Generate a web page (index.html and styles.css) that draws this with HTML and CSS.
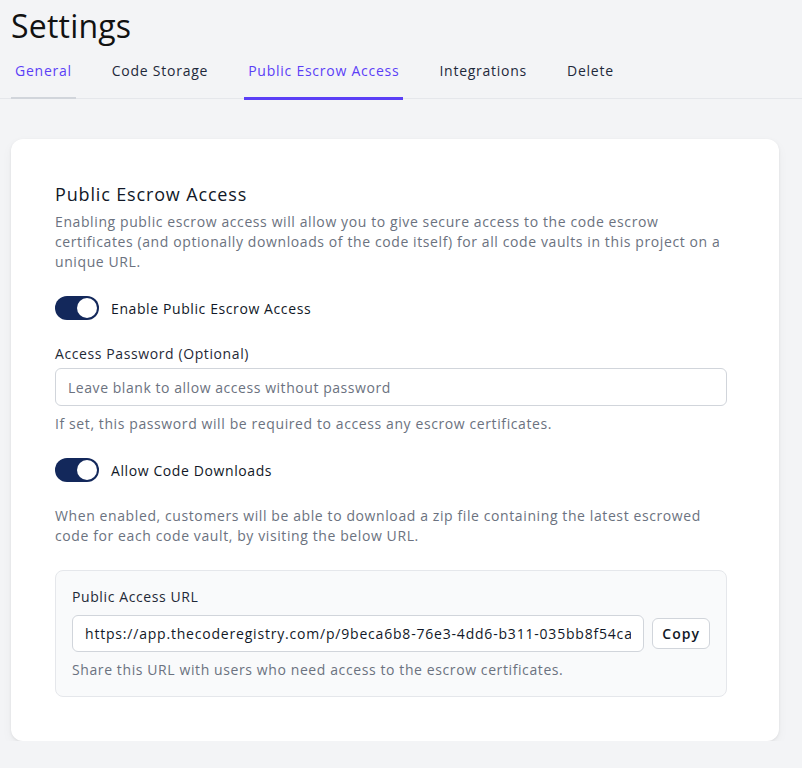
FILE: index.html
```html
<!DOCTYPE html>
<html lang="en">
<head>
  <meta charset="UTF-8" />
  <meta name="viewport" content="width=device-width, initial-scale=1.0"/>
  <title>Settings</title>
  <link rel="stylesheet" href="styles.css">
</head>
<body>
  <h1 class="page-title">Settings</h1>

  <nav class="tabs">
    <a class="tab hovered">General</a>
    <a class="tab">Code Storage</a>
    <a class="tab active">Public Escrow Access</a>
    <a class="tab">Integrations</a>
    <a class="tab">Delete</a>
  </nav>

  <div class="card">
    <div class="card-body">
      <h2 class="section-title">Public Escrow Access</h2>
      <p class="section-desc">Enabling public escrow access will allow you to give secure access to the code escrow certificates (and optionally downloads of the code itself) for all code vaults in this project on a unique URL.</p>

      <label class="switch-row">
        <span class="switch on"><span class="knob"></span></span>
        <span class="switch-label">Enable Public Escrow Access</span>
      </label>

      <div class="field">
        <label class="field-label" for="password">Access Password (Optional)</label>
        <input id="password" class="text-input" type="text" placeholder="Leave blank to allow access without password">
        <p class="help">If set, this password will be required to access any escrow certificates.</p>
      </div>

      <label class="switch-row">
        <span class="switch on"><span class="knob"></span></span>
        <span class="switch-label">Allow Code Downloads</span>
      </label>

      <p class="help downloads-desc">When enabled, customers will be able to download a zip file containing the latest escrowed code for each code vault, by visiting the below URL.</p>

      <div class="url-box">
        <div class="field-label">Public Access URL</div>
        <div class="url-row">
          <input class="text-input url-input" type="text" readonly value="https://app.thecoderegistry.com/p/9beca6b8-76e3-4dd6-b311-035bb8f54ca">
          <button class="copy-btn">Copy</button>
        </div>
        <p class="help">Share this URL with users who need access to the escrow certificates.</p>
      </div>
    </div>
  </div>
</body>
</html>
```

FILE: styles.css
```css
body {
  background-color: #f3f4f6;
  margin: 0;
  font-family: "Open Sans", "Liberation Sans", sans-serif;
  color: #111827;
  letter-spacing: 0.6px;
}

.page-title {
  margin: 0;
  padding: 7px 0 0 11px;
  font-size: 32px;
  font-weight: 400;
  line-height: 38px;
  letter-spacing: 0.2px;
  color: #111111;
}

.tabs {
  display: flex;
  gap: 32px;
  margin-top: 16px;
  padding-left: 11px;
  border-bottom: 1px solid #e5e7eb;
}

.tab {
  padding: 0 4px 16px;
  font-size: 14px;
  font-weight: 500;
  line-height: 20px;
  letter-spacing: 0.75px;
  color: #1e293b;
  border-bottom: 2px solid transparent;
  margin-bottom: -1px;
  cursor: pointer;
}

.tab.hovered {
  color: #5b3ff6;
  border-bottom-color: #d1d5db;
}

.tab.active {
  color: #5b3ff6;
  border-bottom: 3px solid #5b3ff6;
  margin-bottom: -2px;
}

.card {
  background: white;
  margin: 40px 0 0 11px;
  width: 768px;
  border-radius: 12px;
  box-shadow: 0 1px 3px rgba(0, 0, 0, 0.08), 0 4px 12px rgba(0, 0, 0, 0.04);
  padding: 41px 44px 44px;
  box-sizing: border-box;
}

.card-body {
  max-width: 672px;
}

.section-title {
  margin: 0;
  font-size: 18px;
  font-weight: 500;
  line-height: 28px;
  letter-spacing: 0.85px;
  color: #111827;
}

.section-desc {
  margin: 4px 0 0;
  font-size: 14px;
  line-height: 20px;
  color: #6b7280;
}

.switch-row {
  display: flex;
  align-items: center;
  gap: 12px;
  margin-top: 24px;
  cursor: pointer;
}

.switch {
  position: relative;
  width: 44px;
  height: 24px;
  border-radius: 12px;
  background: #d1d5db;
  flex-shrink: 0;
}

.switch.on {
  background: #13285b;
}

.knob {
  position: absolute;
  top: 2px;
  left: 2px;
  width: 20px;
  height: 20px;
  border-radius: 50%;
  background: white;
}

.switch.on .knob {
  left: 22px;
}

.switch-label {
  font-size: 14px;
  font-weight: 500;
  letter-spacing: 0.6px;
  color: #111827;
}

.field {
  margin-top: 24px;
}

.field-label {
  display: block;
  font-size: 14px;
  font-weight: 500;
  line-height: 20px;
  letter-spacing: 0.6px;
  color: #1f2937;
}

.text-input {
  display: block;
  width: 100%;
  box-sizing: border-box;
  height: 38px;
  margin-top: 4px;
  padding: 0 12px;
  border: 1px solid #d1d5db;
  border-radius: 6px;
  font-family: inherit;
  font-size: 14px;
  letter-spacing: 0.55px;
  color: #111827;
  background: white;
}

.text-input::placeholder {
  color: #6b7280;
}

.help {
  margin: 8px 0 0;
  font-size: 14px;
  line-height: 20px;
  color: #6b7280;
}

.downloads-desc {
  margin-top: 24px;
}

.url-box {
  margin-top: 24px;
  padding: 16px;
  background: #f9fafb;
  border: 1px solid #e5e7eb;
  border-radius: 8px;
}

.url-row {
  display: flex;
  align-items: center;
  gap: 8px;
  margin-top: 8px;
}

.url-input {
  flex: 1;
  margin-top: 0;
  height: 37px;
  letter-spacing: 0.8px;
}

.copy-btn {
  border: 1px solid #d1d5db;
  background: white;
  color: #111827;
  font-family: inherit;
  font-size: 14px;
  font-weight: 600;
  letter-spacing: 1px;
  height: 31px;
  padding: 0 9px;
  border-radius: 6px;
  cursor: pointer;
}
```
